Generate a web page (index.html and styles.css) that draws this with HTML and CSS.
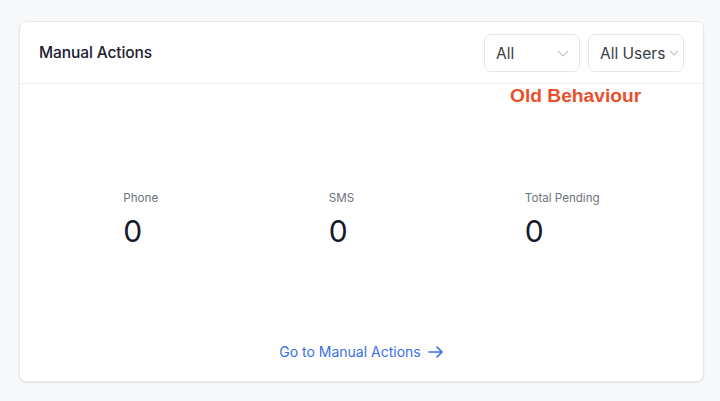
FILE: index.html
```html
<!DOCTYPE html>
<html>
<head>
<meta charset="utf-8">
<link rel="stylesheet" href="styles.css">
</head>
<body>
<div class="card">
  <div class="card-header">
    <div class="title">Manual Actions</div>
    <div class="filters">
      <div class="select select-all"><span>All</span>
        <svg class="chev" width="12" height="7" viewBox="0 0 12 7"><path d="M1 1l5 5 5-5" fill="none" stroke="#c4c7cd" stroke-width="1.2"/></svg>
      </div>
      <div class="select select-users"><span>All Users</span>
        <svg class="chev" width="10" height="6" viewBox="0 0 10 6"><path d="M1 1l4 4 4-4" fill="none" stroke="#c4c7cd" stroke-width="1.1"/></svg>
      </div>
    </div>
  </div>
  <div class="note">Old Behaviour</div>
  <div class="card-body">
    <div class="stats">
      <div class="stat"><div class="label">Phone</div><div class="value">0</div></div>
      <div class="stat"><div class="label">SMS</div><div class="value">0</div></div>
      <div class="stat"><div class="label">Total Pending</div><div class="value">0</div></div>
    </div>
    <a class="link" href="#">Go to Manual Actions
      <svg width="16" height="12" viewBox="0 0 16 12"><path d="M1 6h13M9 1l5 5-5 5" fill="none" stroke="#3a6ee8" stroke-width="1.6" stroke-linecap="round" stroke-linejoin="round"/></svg>
    </a>
  </div>
</div>
</body>
</html>
```

FILE: styles.css
```css
html, body { margin: 0; padding: 0; }
body {
  background: #f7f8fa;
  font-family: Inter, "Noto Sans", sans-serif;
  padding: 21px 16px 0 19px;
  height: 401px;
  box-sizing: border-box;
}
.card {
  position: relative;
  background: #fff;
  border: 1px solid #e6e8eb;
  border-radius: 7px;
  box-shadow: 0 1px 2px rgba(0,0,0,0.08);
  height: 361px;
  box-sizing: border-box;
  display: flex;
  flex-direction: column;
}
.card-header {
  height: 61px;
  flex: none;
  border-bottom: 1px solid #eceef1;
  display: flex;
  align-items: center;
  justify-content: space-between;
  padding: 0 19px 0 19px;
}
.title {
  font-size: 15.5px;
  font-weight: 500;
  color: #1b2030;
  letter-spacing: -0.1px;
}
.filters { display: flex; gap: 8px; margin-top: 1px; }
.select {
  height: 38px;
  box-sizing: border-box;
  border: 1px solid #e3e5e8;
  border-radius: 7px;
  display: flex;
  align-items: center;
  font-size: 15.5px;
  color: #3a3d44;
  overflow: hidden;
  white-space: nowrap;
}
.select span { flex: none; }
.select svg { flex: none; }
.select-all { width: 96px; padding: 0 10px 0 11px; justify-content: space-between; }
.select-users { width: 96px; padding: 0 2px 0 11px; gap: 4px; }
.note {
  position: absolute;
  left: 490px;
  top: 62px;
  font-family: "Liberation Sans", Arial, sans-serif;
  font-weight: bold;
  font-size: 19.2px;
  line-height: 24px;
  color: #e9502b;
}
.card-body {
  flex: 1;
  display: flex;
  flex-direction: column;
  padding: 106px 18px 21px 18px;
}
.stats {
  display: flex;
  justify-content: space-around;
}
.label {
  font-size: 11.6px;
  color: #6b7280;
  line-height: 16px;
}
.value {
  font-size: 30px;
  line-height: 34px;
  color: #141a2a;
  margin-top: 8px;
}
.link {
  margin-top: auto;
  align-self: center;
  color: #3a6ee8;
  text-decoration: none;
  font-size: 14px;
  display: flex;
  align-items: center;
  gap: 7px;
}
```
